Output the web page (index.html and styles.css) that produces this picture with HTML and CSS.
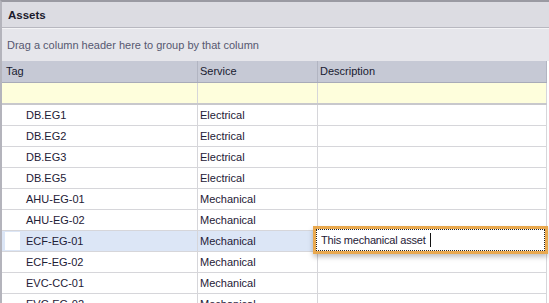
FILE: index.html
```html
<!DOCTYPE html>
<html>
<head>
    <title>Assets</title>
    <link rel="stylesheet" href="styles.css">
</head>
<body>
    <div class="panel">
        <div class="title">Assets</div>
        <div class="group-panel">Drag a column header here to group by that column</div>
        <div class="grid">
            <div class="row header">
                <div class="cell">Tag</div>
                <div class="cell">Service</div>
                <div class="cell">Description</div>
            </div>
            <div class="row filter">
                <div class="cell"></div>
                <div class="cell"></div>
                <div class="cell"></div>
            </div>
            <div class="row">
                <div class="cell tag"><span class="indicator"></span>DB.EG1</div>
                <div class="cell">Electrical</div>
                <div class="cell"></div>
            </div>
            <div class="row">
                <div class="cell tag"><span class="indicator"></span>DB.EG2</div>
                <div class="cell">Electrical</div>
                <div class="cell"></div>
            </div>
            <div class="row">
                <div class="cell tag"><span class="indicator"></span>DB.EG3</div>
                <div class="cell">Electrical</div>
                <div class="cell"></div>
            </div>
            <div class="row">
                <div class="cell tag"><span class="indicator"></span>DB.EG5</div>
                <div class="cell">Electrical</div>
                <div class="cell"></div>
            </div>
            <div class="row">
                <div class="cell tag"><span class="indicator"></span>AHU-EG-01</div>
                <div class="cell">Mechanical</div>
                <div class="cell"></div>
            </div>
            <div class="row">
                <div class="cell tag"><span class="indicator"></span>AHU-EG-02</div>
                <div class="cell">Mechanical</div>
                <div class="cell"></div>
            </div>
            <div class="row focused">
                <div class="cell tag"><span class="indicator"></span>ECF-EG-01</div>
                <div class="cell">Mechanical</div>
                <div class="cell editing">
                    <div class="editor"><div class="editor-inner">This mechanical asset<span class="caret"></span></div></div>
                </div>
            </div>
            <div class="row">
                <div class="cell tag"><span class="indicator"></span>ECF-EG-02</div>
                <div class="cell">Mechanical</div>
                <div class="cell"></div>
            </div>
            <div class="row">
                <div class="cell tag"><span class="indicator"></span>EVC-CC-01</div>
                <div class="cell">Mechanical</div>
                <div class="cell"></div>
            </div>
            <div class="row">
                <div class="cell tag"><span class="indicator"></span>EVC-EG-02</div>
                <div class="cell">Mechanical</div>
                <div class="cell"></div>
            </div>
        </div>
    </div>
</body>
</html>
```

FILE: styles.css
```css
body {
    margin: 0;
    padding: 0;
    font-family: "Liberation Sans", Arial, sans-serif;
    font-size: 11px;
    color: #1e2036;
    background-color: #fff;
    overflow: hidden;
}
.panel {
    width: 549px;
    height: 303px;
    border-top: 2px solid #9a9aa2;
    border-left: 2px solid #b4b4bc;
    box-sizing: border-box;
    overflow: hidden;
}
.title {
    height: 25px;
    line-height: 26px;
    padding-left: 6px;
    font-weight: bold;
    font-size: 11.5px;
    color: #1a1a2c;
    background-color: #dcdce2;
    border-bottom: 1px solid #b8b8c0;
}
.group-panel {
    height: 32px;
    line-height: 32px;
    padding-left: 5px;
    color: #565870;
    background-color: #e6e6eb;
    border-top: 1px solid #f4f4f6;
}
.grid {
    width: 545px;
}
.row {
    display: grid;
    grid-template-columns: 196px 120px 229px;
    height: 21px;
    border-bottom: 1px solid #d6d6da;
    box-sizing: border-box;
    background-color: #fff;
}
.cell {
    border-right: 1px solid #d6d6da;
    line-height: 20px;
    padding-left: 2px;
    white-space: nowrap;
}
.header {
    height: 22px;
    background-color: #c6c9d5;
    border-bottom: 1px solid #a8abb8;
}
.header .cell {
    line-height: 21px;
    color: #181a30;
    border-right-color: #b2b5c2;
    padding-left: 2px;
}
.header .cell:first-child {
    padding-left: 4px;
}
.filter {
    height: 22px;
    background-color: #fefedc;
    border-bottom: 2px solid #c8c8cc;
}
.tag {
    display: flex;
    align-items: center;
    padding-left: 0;
}
.indicator {
    width: 15px;
    height: 18px;
    margin: 0 6px 0 3px;
}
.focused {
    background-color: #dce6f6;
}
.focused .indicator {
    background-color: #fff;
}
.editing {
    position: relative;
}
.editor {
    position: absolute;
    left: -5px;
    top: -5px;
    width: 235px;
    height: 28px;
    box-sizing: border-box;
    border: 3px solid #e9a94f;
    background-color: #fff;
    box-shadow: 0 3px 5px rgba(0, 0, 0, 0.25);
    padding: 0;
}
.editor-inner {
    height: 100%;
    box-sizing: border-box;
    border: 1px dotted #222;
    padding-left: 4px;
    line-height: 20px;
    letter-spacing: -0.2px;
}
.caret {
    display: inline-block;
    width: 1px;
    height: 14px;
    margin-left: 4px;
    vertical-align: -3px;
    background-color: #111;
}
```
